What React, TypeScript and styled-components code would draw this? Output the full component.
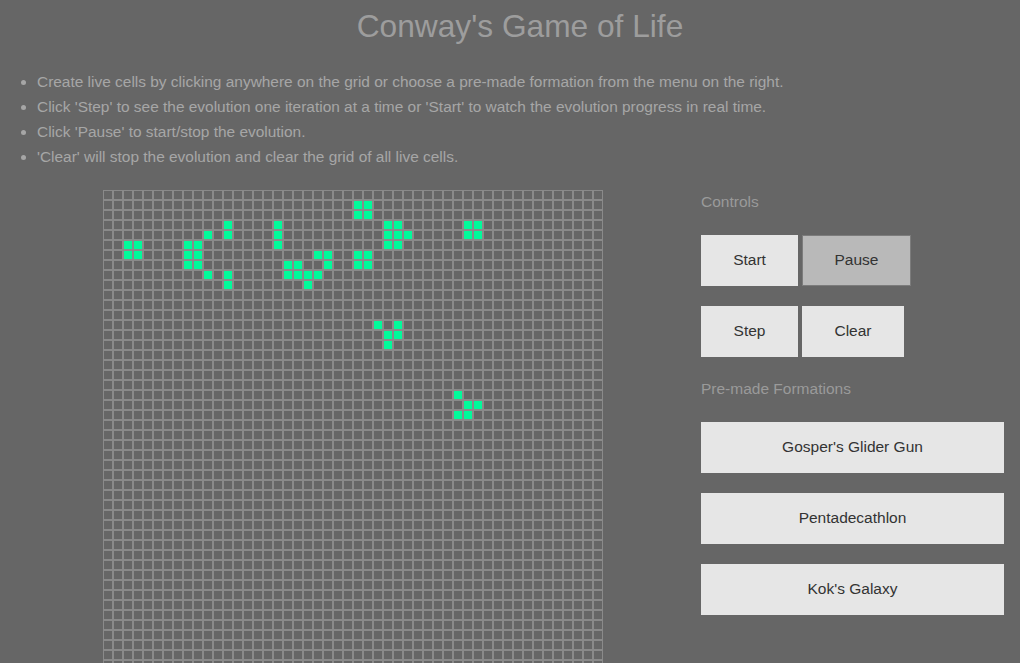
import React, { useState } from 'react';
import styled, { createGlobalStyle } from 'styled-components';

const ROWS = 50;
const COLS = 50;

const initialLive: [number, number][] = [
  [1, 25], [1, 26],
  [2, 25], [2, 26],
  [3, 12], [3, 17], [3, 28], [3, 29], [3, 36], [3, 37],
  [4, 10], [4, 12], [4, 17], [4, 28], [4, 29], [4, 30], [4, 36], [4, 37],
  [5, 2], [5, 3], [5, 8], [5, 9], [5, 17], [5, 28], [5, 29],
  [6, 2], [6, 3], [6, 8], [6, 9], [6, 21], [6, 22], [6, 25], [6, 26],
  [7, 8], [7, 9], [7, 18], [7, 19], [7, 22], [7, 25], [7, 26],
  [8, 10], [8, 12], [8, 18], [8, 19], [8, 20], [8, 21],
  [9, 12], [9, 20],
  [13, 27], [13, 29],
  [14, 28], [14, 29],
  [15, 28],
  [20, 35],
  [21, 36], [21, 37],
  [22, 35], [22, 36],
];

const GlobalStyle = createGlobalStyle`
  body {
    margin: 0;
    background: #666666;
    font-family: "Liberation Sans", Arial, sans-serif;
  }
`;

const Page = styled.div`
  padding-top: 8px;
`;

const Title = styled.h1`
  margin: 0;
  padding-left: 20px;
  text-align: center;
  font-size: 31.7px;
  font-weight: normal;
  line-height: 37px;
  color: #9d9d9d;
`;

const Instructions = styled.ul`
  margin: 24px 0 21px;
  padding-left: 37px;
  font-size: 15.45px;
  line-height: 25px;
  color: #a6a6a6;
`;

const Main = styled.div`
  display: flex;
  align-items: flex-start;
  gap: 98px;
  padding-left: 103px;
`;

const Board = styled.div`
  display: grid;
  grid-template-columns: repeat(${COLS}, 10px);
  grid-auto-rows: 10px;
  flex-shrink: 0;
`;

const Cell = styled.div<{ $alive: boolean }>`
  box-sizing: border-box;
  border: 1px solid #8a8a8a;
  background: ${({ $alive }) => ($alive ? '#00fa9a' : '#666666')};
`;

const Panel = styled.div`
  display: flex;
  flex-direction: column;
  width: 303px;
  padding-top: 3px;
`;

const SectionLabel = styled.div<{ $top?: number }>`
  font-size: 15.5px;
  line-height: 18px;
  color: #9a9a9a;
  margin-top: ${({ $top }) => $top ?? 0}px;
  margin-bottom: 24px;
`;

const ButtonRow = styled.div`
  display: flex;
  gap: 4px;
  margin-bottom: 20px;

  &:last-of-type {
    margin-bottom: 0;
  }
`;

const ControlButton = styled.button<{ $width: number; $active?: boolean }>`
  box-sizing: border-box;
  width: ${({ $width }) => $width}px;
  height: 51px;
  padding: 0 0 1px;
  font-family: "Liberation Sans", Arial, sans-serif;
  font-size: 15.5px;
  color: #333333;
  background: ${({ $active }) => ($active ? '#b9b9b9' : '#e6e6e6')};
  border: ${({ $active }) => ($active ? '1px solid #7c7c7c' : 'none')};
  cursor: pointer;
`;

const FormationList = styled.div`
  display: flex;
  flex-direction: column;
  gap: 20px;
`;

const FormationButton = styled.button`
  width: 303px;
  height: 51px;
  padding: 0 0 1px;
  font-family: "Liberation Sans", Arial, sans-serif;
  font-size: 15.5px;
  color: #333333;
  background: #e6e6e6;
  border: none;
  cursor: pointer;
`;

export default function App() {
  const [live, setLive] = useState<Set<string>>(
    () => new Set(initialLive.map(([r, c]) => `${r}-${c}`))
  );
  const [paused, setPaused] = useState(true);

  const toggle = (key: string) => {
    const next = new Set(live);
    if (next.has(key)) next.delete(key);
    else next.add(key);
    setLive(next);
  };

  const cells = [];
  for (let r = 0; r < ROWS; r++) {
    for (let c = 0; c < COLS; c++) {
      const key = `${r}-${c}`;
      cells.push(<Cell key={key} $alive={live.has(key)} onClick={() => toggle(key)} />);
    }
  }

  return (
    <Page>
      <GlobalStyle />
      <Title>Conway's Game of Life</Title>
      <Instructions>
        <li>Create live cells by clicking anywhere on the grid or choose a pre-made formation from the menu on the right.</li>
        <li>Click 'Step' to see the evolution one iteration at a time or 'Start' to watch the evolution progress in real time.</li>
        <li>Click 'Pause' to start/stop the evolution.</li>
        <li>'Clear' will stop the evolution and clear the grid of all live cells.</li>
      </Instructions>
      <Main>
        <Board>{cells}</Board>
        <Panel>
          <SectionLabel>Controls</SectionLabel>
          <div>
            <ButtonRow>
              <ControlButton $width={97} onClick={() => setPaused(false)}>Start</ControlButton>
              <ControlButton $width={109} $active={paused} onClick={() => setPaused(!paused)}>Pause</ControlButton>
            </ButtonRow>
            <ButtonRow>
              <ControlButton $width={97}>Step</ControlButton>
              <ControlButton $width={102} onClick={() => setLive(new Set())}>Clear</ControlButton>
            </ButtonRow>
          </div>
          <SectionLabel $top={23}>Pre-made Formations</SectionLabel>
          <FormationList>
            <FormationButton>Gosper's Glider Gun</FormationButton>
            <FormationButton>Pentadecathlon</FormationButton>
            <FormationButton>Kok's Galaxy</FormationButton>
          </FormationList>
        </Panel>
      </Main>
    </Page>
  );
}
